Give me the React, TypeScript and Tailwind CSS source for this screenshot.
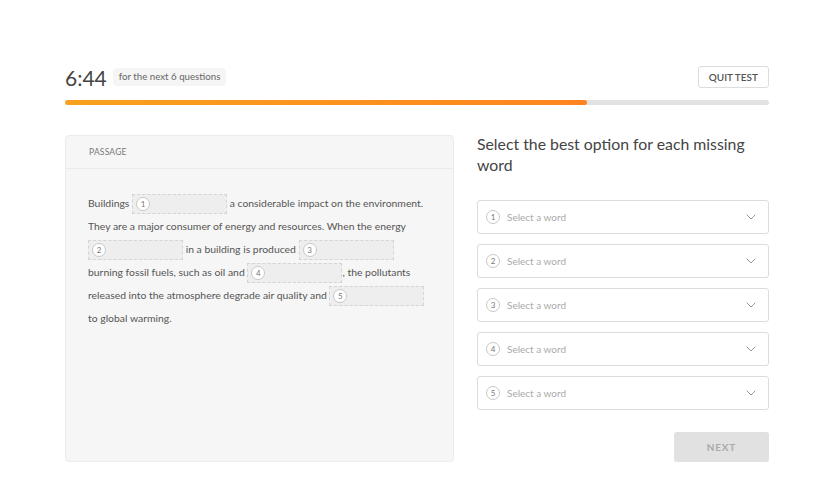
import React from "react";

const Num = ({ n }: { n: number }) => (
  <span className="inline-flex h-[14px] w-[14px] shrink-0 items-center justify-center rounded-full border border-[#c8c8c8] bg-white text-[8px] leading-none text-[#777]">
    {n}
  </span>
);

const Blank = ({ n }: { n: number }) => (
  <span className="inline-flex h-[20px] w-[95px] items-center border border-dashed border-[#d4d4d4] bg-[#eeeeee] px-[3px] align-middle">
    <Num n={n} />
  </span>
);

const Chevron = () => (
  <svg width="10" height="6" viewBox="0 0 10 6" fill="none">
    <path d="M1 1l4 4 4-4" stroke="#999" strokeWidth="1" strokeLinecap="round" strokeLinejoin="round" />
  </svg>
);

const WordSelect = ({ n }: { n: number }) => (
  <div className="flex h-[34px] items-center rounded-[3px] border border-[#dcdcdc] bg-white pl-[8px] pr-[12px]">
    <Num n={n} />
    <span className="ml-[7px] flex-1 text-[10px] text-[#aaaaaa]">Select a word</span>
    <Chevron />
  </div>
);

export default function App() {
  return (
    <div className="min-h-[500px] w-full bg-white font-['Lato','Open_Sans',sans-serif] text-[#555]">
      <div className="ml-[65px] w-[704px] pt-[66px]">
        <div className="flex items-center justify-between">
          <div className="flex items-center">
            <span className="text-[21px] leading-none text-[#444]">6:44</span>
            <span className="ml-[6px] rounded-[4px] bg-[#f5f5f5] px-[6px] py-[4px] text-[9.7px] leading-none text-[#666]">
              for the next 6 questions
            </span>
          </div>
          <button className="h-[22px] rounded-[3px] border border-[#dcdcdc] bg-white px-[10px] text-[10px] font-semibold text-[#555]">
            QUIT TEST
          </button>
        </div>
        <div className="mt-[12px] h-[5px] w-full overflow-hidden rounded-full bg-[#e2e2e2]">
          <div className="h-full rounded-full bg-gradient-to-r from-[#f7a11c] to-[#ff8420]" style={{ width: "74.2%" }} />
        </div>
        <div className="mt-[30px] flex gap-[23px]">
          <div className="h-[327px] w-[389px] rounded-[4px] border border-[#ebebeb] bg-[#f6f6f6]">
            <div className="flex h-[33px] items-center border-b border-[#ebebeb] px-[23px] text-[8.5px] uppercase tracking-[0.2px] text-[#777]">
              Passage
            </div>
            <div className="px-[22px] pt-[23px] text-[10.4px] leading-[23px] text-[#555]">
              Buildings <Blank n={1} /> a considerable impact on the environment.
              They are a major consumer of energy and resources. When the energy{" "}
              <Blank n={2} /> in a building is produced <Blank n={3} /> burning fossil fuels, such as oil and{" "}
              <Blank n={4} />, the pollutants released into the atmosphere degrade air quality and{" "}
              <Blank n={5} /> to global warming.
            </div>
          </div>
          <div className="flex w-[292px] flex-col">
            <h2 className="-mt-[2px] text-[15.8px] leading-[21px] text-[#444]">
              Select the best option for each missing word
            </h2>
            <div className="mt-[25px] flex flex-col gap-[10px]">
              {[1, 2, 3, 4, 5].map((n) => (
                <WordSelect key={n} n={n} />
              ))}
            </div>
            <div className="mt-[22px] flex justify-end">
              <button className="h-[30px] w-[95px] rounded-[3px] bg-[#e1e1e1] text-[10px] font-bold tracking-[0.8px] text-[#aaa]">
                NEXT
              </button>
            </div>
          </div>
        </div>
      </div>
    </div>
  );
}
